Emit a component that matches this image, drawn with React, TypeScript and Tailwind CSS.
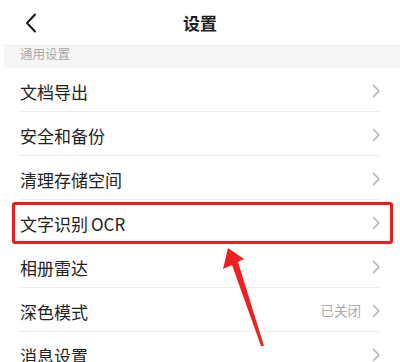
import React from "react";

const rows: { label: string; suffix?: string; value?: string }[] = [
  { label: "文档导出" },
  { label: "安全和备份" },
  { label: "清理存储空间" },
  { label: "文字识别", suffix: "OCR" },
  { label: "相册雷达" },
  { label: "深色模式", value: "已关闭" },
  { label: "消息设置" },
];

function Chevron() {
  return (
    <svg width="9" height="14" viewBox="0 0 9 14" fill="none">
      <path d="M1.5 1.5 L7 7 L1.5 12.5" stroke="#b4b4b4" strokeWidth="1.6" strokeLinecap="round" strokeLinejoin="round" />
    </svg>
  );
}

export default function App() {
  return (
    <div
      className="relative w-[400px] h-[362px] overflow-hidden bg-white"
      style={{ fontFamily: '"Noto Sans CJK SC", "Noto Sans", sans-serif' }}
    >
      {/* header */}
      <div className="relative h-[45px] flex items-center justify-center">
        <div className="absolute left-[25px] top-[13px]">
          <svg width="12" height="20" viewBox="0 0 12 20" fill="none">
            <path d="M10 1.5 L2 10 L10 18.5" stroke="#1a1a1a" strokeWidth="2" strokeLinecap="round" strokeLinejoin="round" />
          </svg>
        </div>
        <span className="text-[17px] font-bold text-[#1e1e1e] leading-none">设置</span>
      </div>

      {/* section header */}
      <div className="ml-[4px] h-[23px] bg-[#f6f6f6] border-t border-[#efefef] flex items-start pl-[16px]">
        <span className="text-[12.5px] leading-none text-[#a6a6a6] mt-[2px]">通用设置</span>
      </div>

      {/* rows */}
      <div className="flex flex-col">
        {rows.map((r) => (
          <div key={r.label} className="ml-[18px] mr-[20px] h-[44px] border-b border-[#eeeeee] flex items-center pt-[3px]">
            <span className="ml-[2px] text-[17px] text-[#222222] leading-none flex-1">
              {r.label}
              {r.suffix && <span className="ml-[3px]">{r.suffix}</span>}
            </span>
            {r.value && <span className="text-[13.5px] text-[#aaaaaa] leading-none mr-[11px]">{r.value}</span>}
            <span className="mr-[-1px] flex items-center">
              <Chevron />
            </span>
          </div>
        ))}
      </div>

      {/* red highlight box */}
      <div className="absolute left-[12px] top-[202px] w-[381px] h-[42px] border-[3px] border-[#ec1c1c] rounded-[3px]" />

      {/* red arrow */}
      <svg className="absolute left-0 top-0" width="400" height="362" viewBox="0 0 400 362">
        <polygon points="228,248 244,259 238,262 264,346 261,346 232,265 223,269" fill="#ee2020" />
      </svg>
    </div>
  );
}
